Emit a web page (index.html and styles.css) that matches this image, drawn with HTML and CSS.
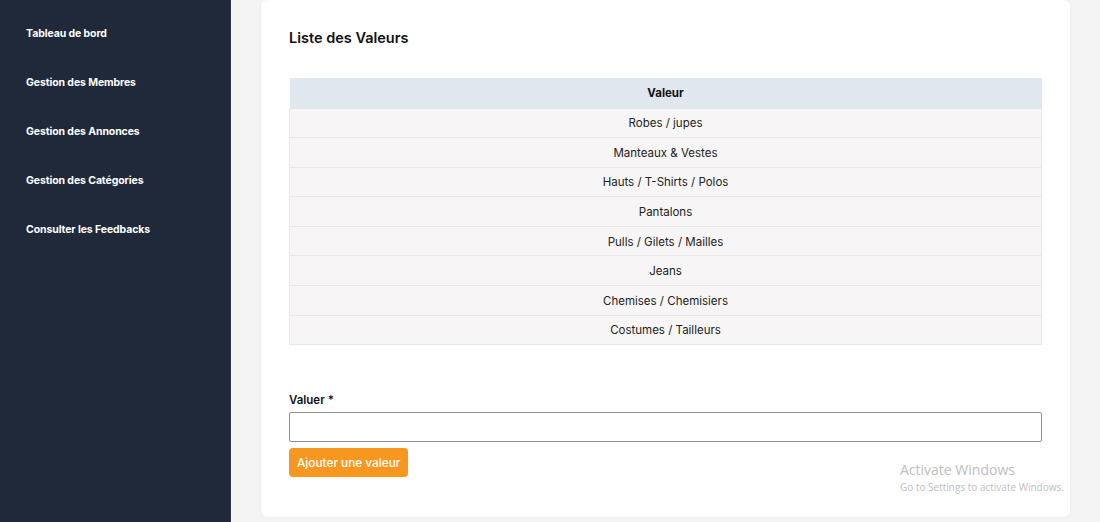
FILE: index.html
```html
<!DOCTYPE html>
<html lang="fr">
<head>
<meta charset="utf-8">
<title>Liste des Valeurs</title>
<link rel="stylesheet" href="styles.css">
</head>
<body>
<div class="layout">
  <aside class="sidebar">
    <nav class="nav">
      <a class="nav-item" href="#">Tableau de bord</a>
      <a class="nav-item" href="#">Gestion des Membres</a>
      <a class="nav-item" href="#">Gestion des Annonces</a>
      <a class="nav-item" href="#">Gestion des Catégories</a>
      <a class="nav-item" href="#">Consulter les Feedbacks</a>
    </nav>
  </aside>
  <main class="main">
    <section class="card">
      <h2 class="card-title">Liste des Valeurs</h2>
      <table class="values">
        <thead>
          <tr><th>Valeur</th></tr>
        </thead>
        <tbody>
          <tr><td>Robes / jupes</td></tr>
          <tr><td>Manteaux &amp; Vestes</td></tr>
          <tr><td>Hauts / T-Shirts / Polos</td></tr>
          <tr><td>Pantalons</td></tr>
          <tr><td>Pulls / Gilets / Mailles</td></tr>
          <tr><td>Jeans</td></tr>
          <tr><td>Chemises / Chemisiers</td></tr>
          <tr><td>Costumes / Tailleurs</td></tr>
        </tbody>
      </table>
      <form class="form">
        <label class="label" for="val">Valuer *</label>
        <input class="input" id="val" type="text">
        <button class="btn" type="button">Ajouter une valeur</button>
      </form>
    </section>
  </main>
</div>
<div class="watermark">
  <div class="wm-title">Activate Windows</div>
  <div class="wm-sub">Go to Settings to activate Windows.</div>
</div>
</body>
</html>
```

FILE: styles.css
```css
* { box-sizing: border-box; }
html, body { margin: 0; padding: 0; }
body {
  font-family: Inter, "Noto Sans", Arial, sans-serif;
  background: #f5f4f4;
  height: 522px;
  overflow: hidden;
}
.layout {
  display: flex;
  height: 522px;
}
.sidebar {
  width: 231px;
  flex: none;
  background: #1f293a;
  border-right: 1px solid #2c3a50;
}
.nav {
  display: flex;
  flex-direction: column;
  padding: 27px 0 0 26px;
  gap: 35px;
}
.nav-item {
  color: #ffffff;
  text-decoration: none;
  font-size: 10.5px;
  font-weight: 700;
  line-height: 14px;
  letter-spacing: -0.1px;
}
.main {
  flex: 1;
  padding: 0 30px 5px 30px;
  display: flex;
}
.card {
  flex: 1;
  background: #ffffff;
  border-radius: 6px;
  box-shadow: 0 0 3px rgba(0,0,0,0.06);
  padding: 28px 28px 0 28px;
}
.card-title {
  margin: 0 0 30px 0;
  font-size: 14.5px;
  font-weight: 600;
  line-height: 20px;
  color: #111111;
}
.values {
  width: 100%;
  border-collapse: collapse;
  font-size: 11.5px;
  color: #222222;
}
.values th {
  background: #e1e7ef;
  font-weight: 700;
  height: 30px;
  padding: 0;
  text-align: center;
  color: #111111;
}
.values td {
  background: #f7f5f5;
  height: 29.6px;
  padding: 1px 0 0 0;
  text-align: center;
  border: 1px solid #e8e6e6;
  border-top: 1px solid #e6e4e4;
}
.form {
  display: flex;
  flex-direction: column;
  align-items: flex-start;
  margin-top: 48px;
}
.label {
  font-size: 11.5px;
  font-weight: 600;
  line-height: 14px;
  color: #111111;
  margin-bottom: 5px;
}
.input {
  width: 100%;
  height: 30px;
  border: 1px solid #8f8f8f;
  border-radius: 2px;
  background: #ffffff;
  margin: 0 0 6px 0;
}
.btn {
  background: #f8971f;
  color: #ffffff;
  border: none;
  border-radius: 4px;
  height: 29px;
  padding: 0 8px;
  font-family: Inter, "Noto Sans", Arial, sans-serif;
  font-size: 11.8px;
  font-weight: 500;
}
.watermark {
  position: absolute;
  left: 900px;
  top: 461px;
  font-family: "Open Sans", "Noto Sans", sans-serif;
  color: #bdbdbd;
}
.wm-title {
  font-size: 14px;
  line-height: 17px;
}
.wm-sub {
  font-size: 10px;
  line-height: 16px;
  margin-top: 1px;
}
```
